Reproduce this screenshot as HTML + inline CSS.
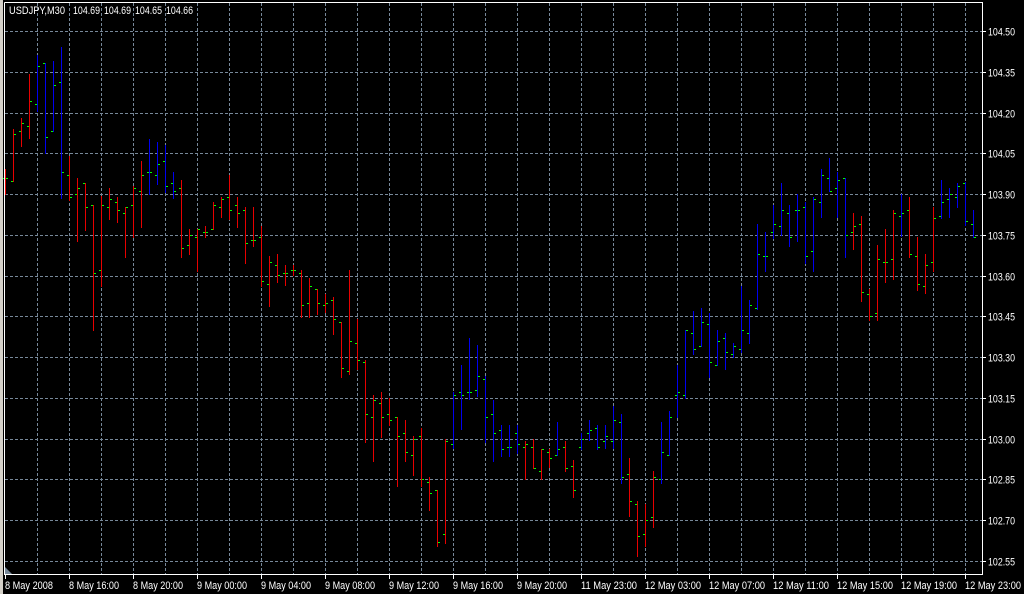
<!DOCTYPE html>
<html><head><meta charset="utf-8"><style>
html,body{margin:0;padding:0;background:#000;width:1024px;height:594px;overflow:hidden}
svg{display:block}
text{font-family:"Liberation Sans",sans-serif;font-size:11px;fill:#fff}
</style></head><body>
<svg id="s" width="1024" height="594" xmlns="http://www.w3.org/2000/svg">
<rect x="0" y="0" width="1024" height="594" fill="#000"/>
<rect x="0" y="0" width="3" height="594" fill="#d4d0c8"/>
<g id="grid" stroke="#778899" stroke-width="1" stroke-dasharray="3,2"></g>
<g id="bars" shape-rendering="crispEdges"></g>
<polyline points="4.5,2.5 982.5,2.5 982.5,574.5 4.5,574.5 4.5,2.5" fill="none" stroke="#fff" stroke-width="1"/>
<polygon points="5,567 5,574 12,574" fill="#778899"/>
<g id="ticks" stroke="#fff" stroke-width="1"></g>
<text x="9" y="14" textLength="56" lengthAdjust="spacingAndGlyphs">USDJPY,M30</text>
<text x="73" y="14" textLength="27" lengthAdjust="spacingAndGlyphs">104.69</text>
<text x="104" y="14" textLength="27" lengthAdjust="spacingAndGlyphs">104.69</text>
<text x="135" y="14" textLength="27" lengthAdjust="spacingAndGlyphs">104.65</text>
<text x="166" y="14" textLength="27" lengthAdjust="spacingAndGlyphs">104.66</text>
<g id="ylab"></g>
<g id="xlab"></g>
</svg>
<script>
var NS="http://www.w3.org/2000/svg";
function el(p,t,a,txt){var e=document.createElementNS(NS,t);for(var k in a)e.setAttribute(k,a[k]);if(txt)e.textContent=txt;document.getElementById(p).appendChild(e);}
var prices=["104.50","104.35","104.20","104.05","103.90","103.75","103.60","103.45","103.30","103.15","103.00","102.85","102.70","102.55"];
for(var k=0;k<14;k++){var y=Math.round(31+k*40.75)+0.5;
 el("grid","line",{x1:5,y1:y,x2:982,y2:y});
 el("ticks","line",{x1:982,y1:y,x2:986,y2:y});
 el("ylab","text",{x:988,y:y+4,textLength:27,lengthAdjust:"spacingAndGlyphs"},prices[k]);}
for(var x=37;x<982;x+=32){el("grid","line",{x1:x+0.5,y1:3,x2:x+0.5,y2:574});}
var xl=["8 May 2008","8 May 16:00","8 May 20:00","9 May 00:00","9 May 04:00","9 May 08:00","9 May 12:00","9 May 16:00","9 May 20:00","11 May 23:00","12 May 03:00","12 May 07:00","12 May 11:00","12 May 15:00","12 May 19:00","12 May 23:00"];
for(var i=0;i<16;i++){var xx=5+64*i;var w=xl[i].length>11?56:(i==0?48:50);
 el("ticks","line",{x1:xx+0.5,y1:575,x2:xx+0.5,y2:579});
 el("xlab","text",{x:xx,y:589,textLength:w,lengthAdjust:"spacingAndGlyphs"},xl[i]);}
var R="#e80000",B="#0000f0";
var d=[
[5,169,194,178,178,R],[13,129,181,181,134,R],[21,118,146,131,123,R],[29,74,138,126,101,R],[37,55,111,104,66,B],[45,63,153,63,137,B],[53,61,131,131,85,B],[61,47,198,82,172,B],[69,156,200,175,197,R],[77,178,241,194,188,R],[85,183,230,183,207,R],[93,205,330,205,273,R],[101,196,286,270,205,R],[109,188,219,207,199,R],[117,197,222,202,210,R],[125,207,257,213,207,R],[133,186,237,205,188,R],[141,161,227,191,175,R],[149,139,194,172,172,B],[157,142,184,175,164,B],[165,145,192,161,186,B],[173,172,198,183,191,B],[181,180,257,188,248,R],[189,229,254,245,235,R],[197,229,271,237,229,R],
[205,226,237,232,232,R],[213,202,229,229,205,R],[221,197,217,207,199,R],[229,175,219,197,210,R],[237,197,227,205,213,R],[245,207,263,210,243,R],[253,207,246,240,240,R],[261,226,286,237,281,R],[269,256,306,284,262,R],[277,254,282,265,275,R],[285,265,285,273,273,R],[293,265,275,270,270,R],[301,270,317,273,305,R],[309,278,317,303,286,R],[317,289,314,289,303,R],[325,294,312,305,303,R],[333,297,334,300,319,R],[341,322,377,322,368,R],[349,270,374,371,341,R],[357,319,369,343,360,R],[365,360,442,362,414,R],
[373,395,461,417,400,R],[381,392,437,403,417,R],[389,398,425,414,420,R],[397,417,486,417,436,R],[405,420,461,433,452,R],[413,436,475,455,439,R],[421,428,486,436,479,R],[429,477,510,482,493,R],[437,490,546,490,542,R],[445,439,543,534,441,R],[453,392,448,444,395,B],[461,365,429,392,395,B],[469,338,399,392,392,B],[477,345,396,390,376,B],[485,376,442,379,417,B],[493,400,461,414,433,B],[501,425,456,430,449,B],[509,425,456,447,447,B],
[517,425,453,433,444,B],[525,441,479,447,444,R],[533,439,468,447,468,R],[541,449,479,471,449,R],[549,449,467,452,458,R],[557,422,455,455,449,B],[565,441,471,447,468,R],[573,460,497,466,490,R],[581,433,449,447,439,B],[589,420,440,433,430,B],[597,425,449,428,447,B],[605,425,448,441,436,B],[613,406,448,441,420,B],[621,414,483,422,477,B],[629,458,516,474,501,R],[637,501,556,504,536,R],[645,504,546,534,520,R],[653,471,527,517,477,R],[661,422,483,479,452,B],[669,411,455,455,417,B],
[677,365,417,395,392,B],[685,330,398,395,330,B],[693,311,354,333,349,B],[701,308,346,346,322,B],[709,313,377,324,362,B],[717,330,365,365,341,B],[725,333,369,338,352,B],[733,343,357,354,346,B],[741,286,352,349,330,B],[749,300,343,333,305,B],[757,224,309,308,254,B],[765,232,271,256,256,B],[773,205,238,232,224,B],[781,183,235,226,210,B],[789,205,246,213,237,B],[797,194,241,210,210,B],[805,202,263,207,256,B],[813,197,271,251,199,B],[821,169,217,202,175,B],[829,158,191,178,191,B],[837,172,217,188,180,B],[845,178,257,178,235,B],[853,213,249,232,226,R],
[861,216,301,224,292,R],[869,289,320,294,316,R],[877,245,320,313,259,R],[885,229,282,262,262,R],[893,210,279,259,213,R],[901,194,236,216,213,B],[909,197,257,210,254,R],[917,237,290,256,284,R],[925,254,293,286,265,R],[933,207,271,262,218,R],[941,180,218,216,202,B],[949,188,217,199,194,B],[957,183,207,197,186,B],[965,182,225,183,221,B],[973,210,237,224,237,B]];
for(var i=0;i<d.length;i++){var b=d[i];
 el("bars","rect",{x:b[0],y:b[1],width:1,height:b[2]-b[1]+1,fill:b[5]});
 el("bars","rect",{x:b[0]-2,y:b[3],width:2,height:1,fill:"#00ff00"});
 el("bars","rect",{x:b[0]+1,y:b[4],width:2,height:1,fill:"#00ff00"});}
</script>
</body></html>
